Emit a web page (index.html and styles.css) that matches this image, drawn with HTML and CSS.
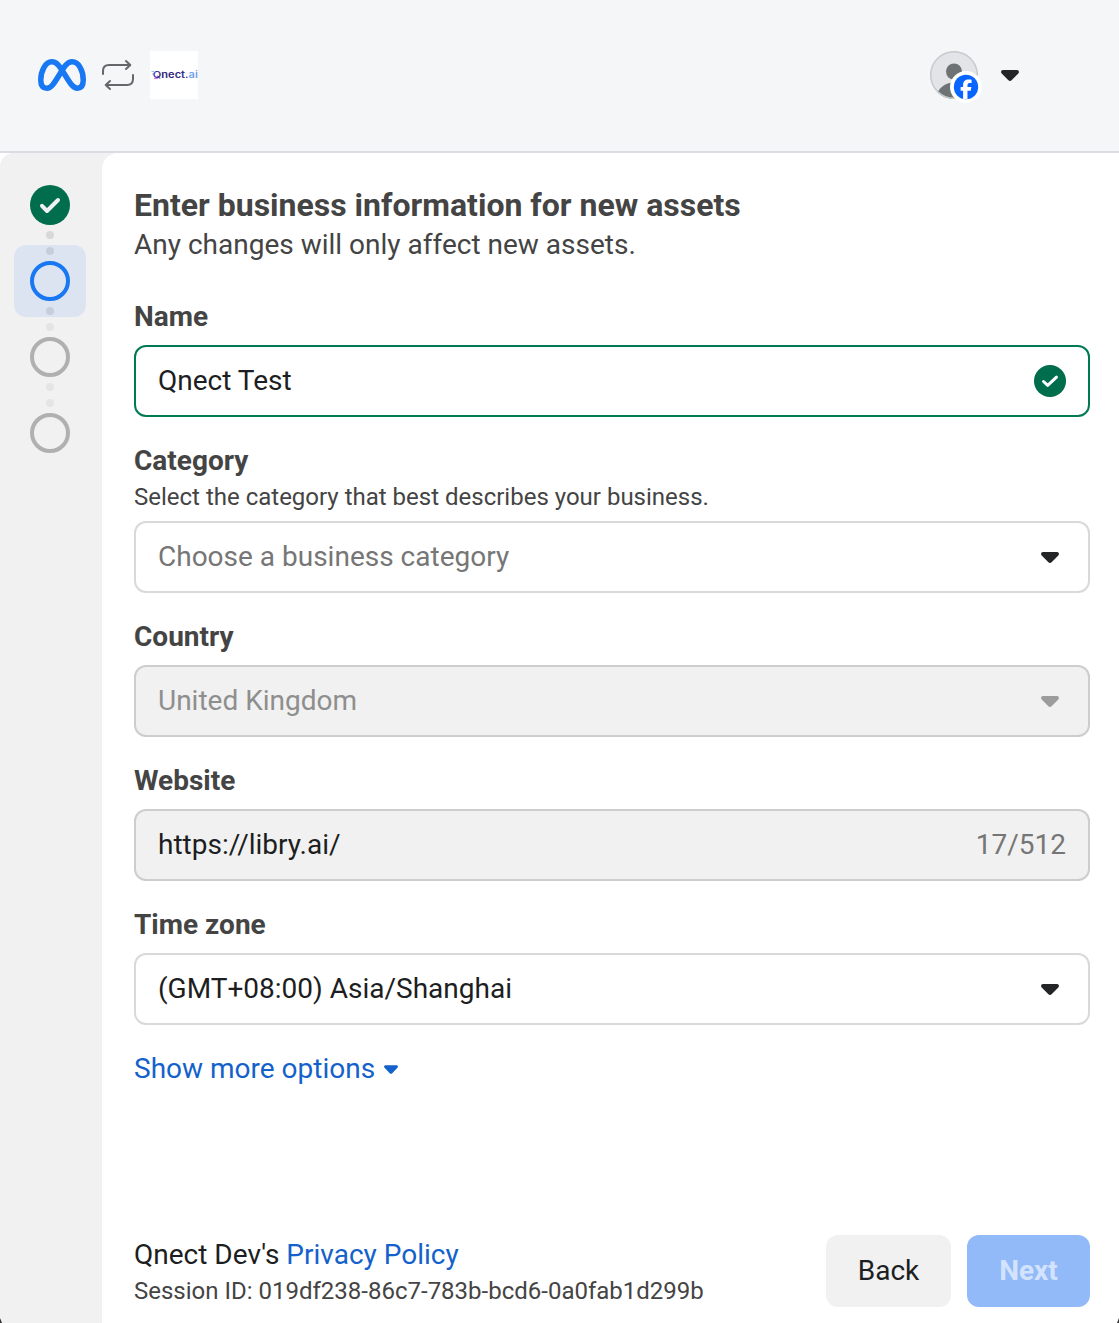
FILE: index.html
```html
<!DOCTYPE html>
<html lang="en">
<head>
<meta charset="utf-8">
<title>Business information</title>
<link rel="stylesheet" href="styles.css">
</head>
<body>
<svg width="0" height="0" class="defs" aria-hidden="true">
  <symbol id="caret" viewBox="0 0 18 11"><path d="M2 0H16C17.8 0 18.6 2.1 17.3 3.4L10.6 10.2Q9 11.7 7.4 10.2L.7 3.4C-.6 2.1 .2 0 2 0Z" fill="currentColor"/></symbol>
</svg>
<div class="page">
  <header class="topbar">
    <div class="brands">
      <svg class="meta" viewBox="0 4 24 16" fill="none" stroke="#1877f2" stroke-width="2.750"><path d="M6.900 5.400C3.700 5.400 1.380 10 1.380 14.450C1.380 17.200 2.500 18.600 4.430 18.600C6.500 18.600 7.900 16.500 10.700 11.900C13.200 7.700 14.600 5.400 17.100 5.400C20.300 5.400 22.620 9.700 22.620 14.500C22.620 17.200 21.600 18.600 19.740 18.600C17.700 18.600 16.400 16.700 13.600 12.100C10.900 7.600 9.400 5.400 6.900 5.400Z"/></svg>
      <svg class="swap" viewBox="0 0 32 32" fill="none" stroke="#65676b" stroke-width="2" stroke-linecap="round" stroke-linejoin="round"><path d="M1 15V12Q1 6 7 6H28M24 2L28.300 6L24 10M31 16V20Q31 26 25 26H4M8 22L3.700 26L8 30"/></svg>
      <svg class="qnect" viewBox="0 0 48 48">
        <defs><linearGradient id="ink" x1="0" x2="1"><stop offset="0" stop-color="#5547c8"/><stop offset=".2" stop-color="#302272"/><stop offset=".74" stop-color="#302f92"/><stop offset=".8" stop-color="#6aa7e8"/><stop offset="1" stop-color="#7898e8"/></linearGradient></defs>
        <rect width="48" height="48" fill="#fff"/>
        <path d="M1.500 20.500H4M2 23H4" stroke="#62bfe8" stroke-width=".8"/>
        <path d="M4 27.500h4" stroke="#d878ec" stroke-width="1"/>
        <text transform="translate(2.800 27) scale(1.250 1)" textLength="36" lengthAdjust="spacingAndGlyphs" fill="url(#ink)">Qnect.ai</text>
      </svg>
    </div>
    <div class="account">
      <div class="avatar">
        <svg viewBox="0 0 48 48"><defs><clipPath id="round"><circle cx="24" cy="24" r="24"/></clipPath></defs><g clip-path="url(#round)"><circle cx="24" cy="24" r="24" fill="#e2e4e8"/><circle cx="24" cy="20.500" r="8" fill="#6d7275"/><path d="M6 46C8 37 15 31.500 24 31.500S40 37 42 46V48H6Z" fill="#6d7275"/></g><circle cx="24" cy="24" r="23.300" fill="none" stroke="#c9cbcf" stroke-width="1.500"/></svg>
        <svg class="badge" viewBox="-16 -16 32 32"><circle r="16" fill="#fff"/><circle r="12.200" fill="#0866ff"/><path transform="translate(-12 -12)" d="M9.101 23.900v-8.189H6.627v-3.667h2.474v-1.580c0-4.085 1.848-5.978 5.858-5.978.401 0 .955.042 1.468.103a8.680 8.680 0 0 1 1.141.195v3.325a8.623 8.623 0 0 0-.653-.036 26.805 26.805 0 0 0-.733-.009c-.707 0-1.259.096-1.675.309a1.686 1.686 0 0 0-.679.622c-.258.420-.374.995-.374 1.752v1.297h3.919l-.673 3.667h-3.246V23.900Z" fill="#fff"/></svg>
      </div>
      <svg class="caret"><use href="#caret"/></svg>
    </div>
  </header>
  <div class="body">
    <nav class="steps">
      <div class="step"><span class="dot blank"></span><svg class="mark" viewBox="0 0 40 40"><circle cx="20" cy="20" r="20" fill="#006d4c"/><path d="M12 20.800L17 26L28 15" fill="none" stroke="#f1f1f1" stroke-width="4" stroke-linecap="round" stroke-linejoin="round"/></svg><span class="dot done"></span></div>
      <div class="step active"><span class="dot"></span><span class="ring"></span><span class="dot"></span></div>
      <div class="step"><span class="dot"></span><span class="ring"></span><span class="dot"></span></div>
      <div class="step"><span class="dot"></span><span class="ring"></span></div>
    </nav>
    <main class="content">
      <h1>Enter business information for new assets</h1>
      <p class="lead">Any changes will only affect new assets.</p>
      <form class="form">
        <section class="group">
          <h2>Name</h2>
          <div class="field valid"><span>Qnect Test</span><svg class="check" viewBox="0 0 32 32"><circle cx="16" cy="16" r="16" fill="#006d4c"/><path d="M9.500 16.500L13.700 20.400L22.500 12.200" fill="none" stroke="#fff" stroke-width="3" stroke-linecap="round" stroke-linejoin="round"/></svg></div>
        </section>
        <section class="group">
          <h2>Category</h2>
          <p class="hint">Select the category that best describes your business.</p>
          <div class="field placeholder"><span>Choose a business category</span><svg class="caret"><use href="#caret"/></svg></div>
        </section>
        <section class="group">
          <h2>Country</h2>
          <div class="field disabled"><span>United Kingdom</span><svg class="caret"><use href="#caret"/></svg></div>
        </section>
        <section class="group">
          <h2>Website</h2>
          <div class="field readonly"><span>https://libry.ai/</span><span class="count">17/512</span></div>
        </section>
        <section class="group">
          <h2>Time zone</h2>
          <div class="field"><span>(GMT+08:00) Asia/Shanghai</span><svg class="caret"><use href="#caret"/></svg></div>
        </section>
      </form>
      <a class="more"><span>Show more options</span><svg class="caret small"><use href="#caret"/></svg></a>
      <footer class="footer">
        <div class="legal">
          <p class="policy">Qnect Dev's <a>Privacy Policy</a></p>
          <p class="session">Session ID: 019df238-86c7-783b-bcd6-0a0fab1d299b</p>
        </div>
        <div class="actions"><button class="back">Back</button><button class="next" disabled>Next</button></div>
      </footer>
    </main>
  </div>
</div>
</body>
</html>
```
FILE: styles.css
```css
* { box-sizing: border-box; }
body { margin: 0; font-family: Roboto, "Liberation Sans", sans-serif; font-size: 28px; line-height: 40px; color: #1c1e21; background: #fff; }
h1, h2, p { margin: 0; }
svg { display: block; flex: none; }
.defs { position: absolute; }
.page { position: relative; height: 1323px; display: flex; flex-direction: column; overflow: hidden; }
/* Window corners */
.page::before, .page::after { content: ""; position: absolute; bottom: 0; width: 2px; height: 5px; background: #333; }
.page::before { left: 0; clip-path: polygon(0 0, 100% 100%, 0 100%); }
.page::after { right: 0; clip-path: polygon(100% 0, 100% 100%, 0 100%); }

.topbar { height: 153px; flex: none; display: flex; justify-content: space-between; align-items: center; padding: 0 100px 1px 38px; background: #f5f6f8; border-bottom: 2px solid #dadde1; }
.brands { display: flex; align-items: center; gap: 16px; }
.meta { width: 48px; height: 32px; }
.swap { width: 32px; height: 32px; }
.qnect { width: 48px; height: 48px; }
.qnect text { font: 600 9.500px Inter, sans-serif; }
.account { display: flex; align-items: center; gap: 23px; }
.avatar { position: relative; width: 48px; height: 48px; }
.badge { position: absolute; left: 20px; top: 20px; width: 32px; height: 32px; }
.caret { width: 18px; height: 11px; color: #242526; }
.caret.small { width: 14px; height: 9px; color: inherit; }

.body { flex: 1; display: flex; background: linear-gradient(to right, #fff 50px, #f1f1f1 50px); }
.steps { width: 102px; flex: none; padding: 16px 16px 0 14px; display: flex; flex-direction: column; gap: 4px; background: #f1f1f1; border-top-left-radius: 14px; }
.step { height: 72px; padding-top: 2px; display: flex; flex-direction: column; align-items: center; gap: 6px; border-radius: 12px; }
.step.active { background: #dde4f1; }
.mark, .ring { width: 40px; height: 40px; flex: none; }
.ring { border: 4px solid #b0b0b0; border-radius: 50%; }
.active .ring { border-color: #1877f2; }
.dot { width: 8px; height: 8px; border-radius: 50%; background: #e4e4e4; }
.dot.done { background: #d8d8d8; }
.dot.blank { background: transparent; }
.active .dot { background: #c7cedb; }

.content { flex: 1; display: flex; flex-direction: column; padding: 32px 29px 16px 32px; background: #fff; border-top-left-radius: 16px; color: #444; }
h1 { font-size: 32px; font-weight: 700; line-height: 40px; color: #444; }
.lead { line-height: 40px; }
.form { display: flex; flex-direction: column; gap: 24px; margin-top: 32px; }
h2 { font-size: 28px; font-weight: 700; line-height: 40px; margin-bottom: 8px; color: #444; }
.hint { font-size: 24px; line-height: 32px; margin: -8px 0 8px; }
.field { height: 72px; display: flex; justify-content: space-between; align-items: center; padding: 0 22px; border: 2px solid #d9d9d9; border-radius: 12px; background: #fff; color: #1c1e21; }
.field .caret { margin-right: 7px; }
.field.valid { border-color: #007a55; }
.check { width: 32px; height: 32px; }
.field.placeholder { color: #767676; }
.field.disabled, .field.readonly { background: #f1f1f1; border-color: #cdcdcd; }
.field.disabled { color: #8e8e8e; }
.field.disabled .caret { color: #9c9c9c; }
.field .count { color: #767676; }
.more { display: flex; align-items: center; gap: 9px; margin-top: 24px; color: #1461cc; }

.footer { display: flex; justify-content: space-between; align-items: flex-end; margin-top: auto; }
.policy { line-height: 40px; color: #1c1e21; }
.policy a { color: #1461cc; }
.session { font-size: 24px; line-height: 32px; }
.actions { display: flex; gap: 16px; }
button { height: 72px; padding: 0; border: 0; border-radius: 12px; font: inherit; }
.back { width: 125px; background: #f1f1f1; color: #1c1e21; }
.next { width: 123px; background: #92b9f8; color: #d3e3fd; font-weight: 700; }
```
